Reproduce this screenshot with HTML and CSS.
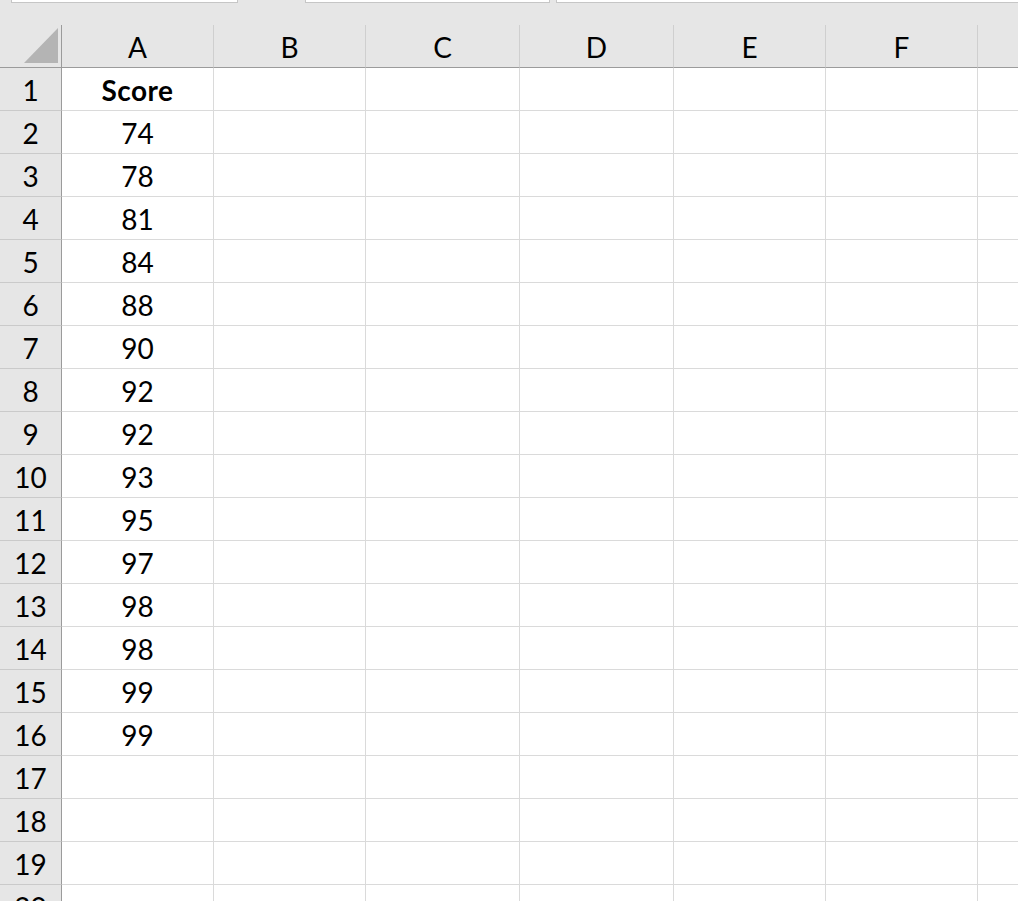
FILE: index.html
```html
<!DOCTYPE html>
<html lang="en">
<head>
  <meta charset="UTF-8" />
  <title>Score - Excel</title>
  <link rel="stylesheet" href="styles.css">
</head>
<body>
  <!-- name box / formula bar edges -->
  <div class="topbar">
    <div class="box box-name"></div>
    <div class="box box-mid"></div>
    <div class="box box-formula"></div>
  </div>

  <div class="sheet">
    <div class="corner"><div class="tri"></div></div>
    <div class="colhead">A</div>
    <div class="colhead">B</div>
    <div class="colhead">C</div>
    <div class="colhead">D</div>
    <div class="colhead">E</div>
    <div class="colhead">F</div>
    <div class="colhead last"></div>

    <div class="rowhead">1</div><div class="cell bold">Score</div><div class="cell"></div><div class="cell"></div><div class="cell"></div><div class="cell"></div><div class="cell"></div><div class="cell last"></div>
    <div class="rowhead">2</div><div class="cell">74</div><div class="cell"></div><div class="cell"></div><div class="cell"></div><div class="cell"></div><div class="cell"></div><div class="cell last"></div>
    <div class="rowhead">3</div><div class="cell">78</div><div class="cell"></div><div class="cell"></div><div class="cell"></div><div class="cell"></div><div class="cell"></div><div class="cell last"></div>
    <div class="rowhead">4</div><div class="cell">81</div><div class="cell"></div><div class="cell"></div><div class="cell"></div><div class="cell"></div><div class="cell"></div><div class="cell last"></div>
    <div class="rowhead">5</div><div class="cell">84</div><div class="cell"></div><div class="cell"></div><div class="cell"></div><div class="cell"></div><div class="cell"></div><div class="cell last"></div>
    <div class="rowhead">6</div><div class="cell">88</div><div class="cell"></div><div class="cell"></div><div class="cell"></div><div class="cell"></div><div class="cell"></div><div class="cell last"></div>
    <div class="rowhead">7</div><div class="cell">90</div><div class="cell"></div><div class="cell"></div><div class="cell"></div><div class="cell"></div><div class="cell"></div><div class="cell last"></div>
    <div class="rowhead">8</div><div class="cell">92</div><div class="cell"></div><div class="cell"></div><div class="cell"></div><div class="cell"></div><div class="cell"></div><div class="cell last"></div>
    <div class="rowhead">9</div><div class="cell">92</div><div class="cell"></div><div class="cell"></div><div class="cell"></div><div class="cell"></div><div class="cell"></div><div class="cell last"></div>
    <div class="rowhead">10</div><div class="cell">93</div><div class="cell"></div><div class="cell"></div><div class="cell"></div><div class="cell"></div><div class="cell"></div><div class="cell last"></div>
    <div class="rowhead">11</div><div class="cell">95</div><div class="cell"></div><div class="cell"></div><div class="cell"></div><div class="cell"></div><div class="cell"></div><div class="cell last"></div>
    <div class="rowhead">12</div><div class="cell">97</div><div class="cell"></div><div class="cell"></div><div class="cell"></div><div class="cell"></div><div class="cell"></div><div class="cell last"></div>
    <div class="rowhead">13</div><div class="cell">98</div><div class="cell"></div><div class="cell"></div><div class="cell"></div><div class="cell"></div><div class="cell"></div><div class="cell last"></div>
    <div class="rowhead">14</div><div class="cell">98</div><div class="cell"></div><div class="cell"></div><div class="cell"></div><div class="cell"></div><div class="cell"></div><div class="cell last"></div>
    <div class="rowhead">15</div><div class="cell">99</div><div class="cell"></div><div class="cell"></div><div class="cell"></div><div class="cell"></div><div class="cell"></div><div class="cell last"></div>
    <div class="rowhead">16</div><div class="cell">99</div><div class="cell"></div><div class="cell"></div><div class="cell"></div><div class="cell"></div><div class="cell"></div><div class="cell last"></div>
    <div class="rowhead">17</div><div class="cell"></div><div class="cell"></div><div class="cell"></div><div class="cell"></div><div class="cell"></div><div class="cell"></div><div class="cell last"></div>
    <div class="rowhead">18</div><div class="cell"></div><div class="cell"></div><div class="cell"></div><div class="cell"></div><div class="cell"></div><div class="cell"></div><div class="cell last"></div>
    <div class="rowhead">19</div><div class="cell"></div><div class="cell"></div><div class="cell"></div><div class="cell"></div><div class="cell"></div><div class="cell"></div><div class="cell last"></div>
    <div class="rowhead">20</div><div class="cell"></div><div class="cell"></div><div class="cell"></div><div class="cell"></div><div class="cell"></div><div class="cell"></div><div class="cell last"></div>
  </div>
</body>
</html>
```

FILE: styles.css
```css
html, body { margin: 0; padding: 0; overflow: hidden; height: 901px; }
body { background: #fff; font-family: Lato, "Open Sans", "Liberation Sans", sans-serif; color: #000; }

/* top strip with bottom edges of the name box and formula bar */
.topbar { height: 25px; background: #e6e6e6; position: relative; }
.box {
  position: absolute;
  top: 0;
  height: 2px;
  background: #fff;
  border: 1px solid #c6c6c6;
  border-top: none;
}
.box-name { left: 11px; width: 225px; }
.box-mid { left: 305px; width: 243px; }
.box-formula { left: 556px; right: -2px; }

/* grid */
.sheet {
  display: grid;
  grid-template-columns: 62px 152px 152px 154px 154px 152px 152px 1fr;
  grid-auto-rows: 43px;
}

.corner, .colhead, .rowhead, .cell { box-sizing: border-box; }

.corner {
  background: #e6e6e6;
  border-right: 1px solid #9b9b9b;
  border-bottom: 1px solid #9b9b9b;
  position: relative;
}
.tri {
  position: absolute;
  left: 24px;
  top: 3px;
  width: 0;
  height: 0;
  border-left: 34px solid transparent;
  border-bottom: 35px solid #b4b4b4;
}

.colhead {
  background: #e6e6e6;
  border-right: 1px solid #cfcfcf;
  border-bottom: 1px solid #9b9b9b;
  display: flex;
  align-items: center;
  justify-content: center;
  font-size: 28px;
  padding-top: 2px;
}
.colhead.last { border-right: none; }

.rowhead {
  background: #e6e6e6;
  border-right: 1px solid #9b9b9b;
  border-bottom: 1px solid #cacaca;
  display: flex;
  align-items: center;
  justify-content: center;
  font-size: 28px;
  padding-top: 2px;
}

.cell {
  border-right: 1px solid #dadada;
  border-bottom: 1px solid #dadada;
  display: flex;
  align-items: center;
  justify-content: center;
  font-size: 28px;
  padding-top: 2px;
}
.cell.last { border-right: none; }
.bold { font-weight: bold; letter-spacing: 0.5px; }
```
